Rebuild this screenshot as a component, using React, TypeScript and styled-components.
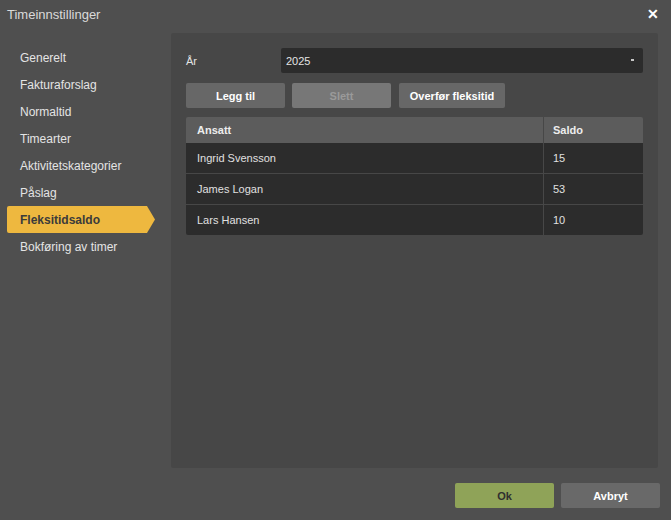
import React from 'react';
import styled, { createGlobalStyle } from 'styled-components';

const GlobalStyle = createGlobalStyle`
  html, body {
    margin: 0;
    padding: 0;
    background-color: #4f4f4f;
  }
  body {
    font-family: 'Liberation Sans', Arial, sans-serif;
  }
`;

const Dialog = styled.div`
  width: 671px;
  height: 520px;
  display: flex;
  flex-direction: column;
  background-color: #4f4f4f;
  color: #e2e2e2;
  overflow: hidden;
`;

const TitleBar = styled.div`
  height: 28px;
  display: flex;
  align-items: center;
  justify-content: space-between;
  padding: 0 12px 0 7px;
  font-size: 13px;
  color: #dadada;
`;

const CloseButton = styled.button`
  border: none;
  background: none;
  padding: 0;
  color: #ffffff;
  font-family: 'Liberation Sans', Arial, sans-serif;
  font-size: 14px;
  font-weight: 700;
  cursor: pointer;
  line-height: 1;
`;

const Body = styled.div`
  flex: 1;
  display: flex;
  min-height: 0;
`;

const Sidebar = styled.nav`
  width: 164px;
  padding: 16px 0 0 7px;
  display: flex;
  flex-direction: column;
`;

const NavItem = styled.div<{ $active?: boolean }>`
  height: 27px;
  width: 148px;
  display: flex;
  align-items: center;
  padding-left: 13px;
  box-sizing: border-box;
  font-size: 12px;
  font-weight: ${(p) => (p.$active ? 700 : 400)};
  color: ${(p) => (p.$active ? '#3b3b3b' : '#e4e4e4')};
  background-color: ${(p) => (p.$active ? '#eeb83f' : 'transparent')};
  border-radius: 2px 0 0 2px;
  clip-path: ${(p) =>
    p.$active
      ? 'polygon(0 0, calc(100% - 8px) 0, 100% 50%, calc(100% - 8px) 100%, 0 100%)'
      : 'none'};
  cursor: pointer;
`;

const Panel = styled.div`
  margin-top: 5px;
  width: 487px;
  height: 435px;
  box-sizing: border-box;
  padding: 15px;
  background-color: #474747;
  border-radius: 2px;
`;

const FieldRow = styled.div`
  display: flex;
  align-items: center;
  height: 25px;
`;

const Label = styled.div`
  width: 95px;
  font-size: 11px;
  color: #e4e4e4;
`;

const Select = styled.div`
  flex: 1;
  height: 25px;
  display: flex;
  align-items: center;
  justify-content: space-between;
  padding: 0 9px 0 5px;
  background-color: #2c2c2c;
  border-radius: 2px;
  font-size: 11px;
  color: #e4e4e4;
`;

const Caret = styled.span`
  width: 3px;
  height: 2px;
  background-color: #c8c8c8;
  margin-top: -1px;
`;

const ButtonRow = styled.div`
  display: flex;
  margin-top: 10px;
  gap: 7px;
`;

const ActionButton = styled.button<{ $width: number; $disabled?: boolean }>`
  width: ${(p) => p.$width}px;
  height: 25px;
  border: none;
  border-radius: 2px;
  font-family: 'Liberation Sans', Arial, sans-serif;
  font-size: 11px;
  font-weight: 700;
  color: ${(p) => (p.$disabled ? '#9a9a9a' : '#ffffff')};
  background-color: ${(p) => (p.$disabled ? '#777777' : '#676767')};
  cursor: ${(p) => (p.$disabled ? 'default' : 'pointer')};
`;

const Table = styled.div`
  margin-top: 9px;
  border-radius: 2px;
  overflow: hidden;
`;

const HeaderRow = styled.div`
  display: grid;
  grid-template-columns: 1fr 1px 99px;
  height: 26px;
  background-color: #5c5c5c;
  font-size: 11px;
  font-weight: 700;
  color: #ededed;
`;

const DataRow = styled.div`
  display: grid;
  grid-template-columns: 1fr 1px 99px;
  height: 30px;
  background-color: #2c2c2c;
  font-size: 11px;
  color: #e0e0e0;
  & + & {
    border-top: 1px solid #474747;
  }
`;

const Cell = styled.div<{ $pad: number }>`
  display: flex;
  align-items: center;
  padding-left: ${(p) => p.$pad}px;
`;

const Divider = styled.div`
  background-color: #474747;
`;

const Footer = styled.div`
  display: flex;
  justify-content: flex-end;
  gap: 7px;
  padding: 15px 11px 12px;
`;

const FooterButton = styled.button<{ $primary?: boolean }>`
  width: 99px;
  height: 25px;
  border: none;
  border-radius: 2px;
  font-family: 'Liberation Sans', Arial, sans-serif;
  font-size: 11px;
  font-weight: 700;
  color: ${(p) => (p.$primary ? '#2f2f2f' : '#ffffff')};
  background-color: ${(p) => (p.$primary ? '#8fa358' : '#696969')};
  cursor: pointer;
`;

const menu = [
  'Generelt',
  'Fakturaforslag',
  'Normaltid',
  'Timearter',
  'Aktivitetskategorier',
  'Påslag',
  'Fleksitidsaldo',
  'Bokføring av timer',
];

const rows = [
  { name: 'Ingrid Svensson', saldo: 15 },
  { name: 'James Logan', saldo: 53 },
  { name: 'Lars Hansen', saldo: 10 },
];

const App: React.FC = () => {
  return (
    <>
      <GlobalStyle />
      <Dialog>
        <TitleBar>
          <span>Timeinnstillinger</span>
          <CloseButton>✕</CloseButton>
        </TitleBar>
        <Body>
          <Sidebar>
            {menu.map((item) => (
              <NavItem key={item} $active={item === 'Fleksitidsaldo'}>
                {item}
              </NavItem>
            ))}
          </Sidebar>
          <Panel>
            <FieldRow>
              <Label>År</Label>
              <Select>
                <span>2025</span>
                <Caret />
              </Select>
            </FieldRow>
            <ButtonRow>
              <ActionButton $width={99}>Legg til</ActionButton>
              <ActionButton $width={99} $disabled>
                Slett
              </ActionButton>
              <ActionButton $width={106} style={{ marginLeft: 1 }}>
                Overfør fleksitid
              </ActionButton>
            </ButtonRow>
            <Table>
              <HeaderRow>
                <Cell $pad={11}>Ansatt</Cell>
                <Divider />
                <Cell $pad={9}>Saldo</Cell>
              </HeaderRow>
              {rows.map((r) => (
                <DataRow key={r.name}>
                  <Cell $pad={11}>{r.name}</Cell>
                  <Divider />
                  <Cell $pad={9}>{r.saldo}</Cell>
                </DataRow>
              ))}
            </Table>
          </Panel>
        </Body>
        <Footer>
          <FooterButton $primary>Ok</FooterButton>
          <FooterButton>Avbryt</FooterButton>
        </Footer>
      </Dialog>
    </>
  );
};

export default App;
